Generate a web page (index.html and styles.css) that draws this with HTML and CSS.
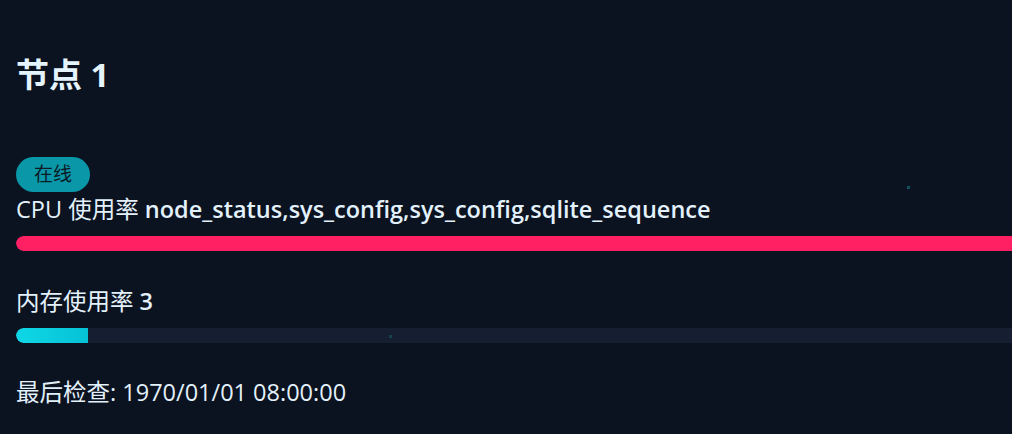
FILE: index.html
```html
<!DOCTYPE html>
<html lang="zh">
<head>
<meta charset="utf-8">
<link rel="stylesheet" href="styles.css">
</head>
<body>
<div class="page">
  <span class="dot dot-a"></span>
  <span class="dot dot-b"></span>
  <h1 class="title">节点 1</h1>
  <div class="card">
    <span class="badge">在线</span>
    <div class="metric-label">CPU 使用率 <b>node_status,sys_config,sys_config,sqlite_sequence</b></div>
    <div class="bar"><div class="fill fill-cpu" style="width:100%"></div></div>
    <div class="metric-label mem">内存使用率 <b>3</b></div>
    <div class="bar"><div class="fill fill-mem" style="width:72px"></div></div>
    <div class="checked">最后检查: 1970/01/01 08:00:00</div>
  </div>
</div>
</body>
</html>
```
FILE: styles.css
```css
html, body {
  margin: 0;
  padding: 0;
  background: #0b1220;
  overflow: hidden;
}
body {
  font-family: "Open Sans", "Noto Sans CJK SC", sans-serif;
  color: #e2f1fb;
}
.page {
  position: relative;
  width: 1040px;
  height: 434px;
  padding: 0 0 0 16px;
  box-sizing: border-box;
}
.title {
  margin: 0;
  padding-top: 52px;
  font-size: 33px;
  line-height: 46px;
  font-weight: 700;
  color: #e4f4fd;
}
.card {
  display: flex;
  flex-direction: column;
  align-items: flex-start;
  margin-top: 59px;
}
.badge {
  display: inline-block;
  background: #0a97a8;
  color: #0a1b26;
  font-size: 19px;
  line-height: 35px;
  height: 35px;
  padding: 0 18px;
  border-radius: 18px;
}
.metric-label {
  font-size: 23.5px;
  line-height: 32px;
  margin-top: 1px;
}
.metric-label b { font-weight: 600; }
.metric-label.mem { margin-top: 34px; }
.bar {
  width: 100%;
  height: 15px;
  margin-top: 11px;
  background: #161e31;
  border-radius: 8px;
  overflow: hidden;
}
.fill { height: 100%; border-radius: 8px 0 0 8px; }
.fill-cpu { background: #ff1f63; border-radius: 8px; }
.fill-mem { background: linear-gradient(90deg, #0fd7e6, #06c2d6); }
.checked {
  font-size: 23.5px;
  line-height: 32px;
  margin-top: 33px;
}
.dot {
  position: absolute;
  width: 3px;
  height: 3px;
  background: #11505e;
}
.dot-a { left: 907px; top: 186px; }
.dot-b { left: 389px; top: 335px; background: #15404e; }
```
